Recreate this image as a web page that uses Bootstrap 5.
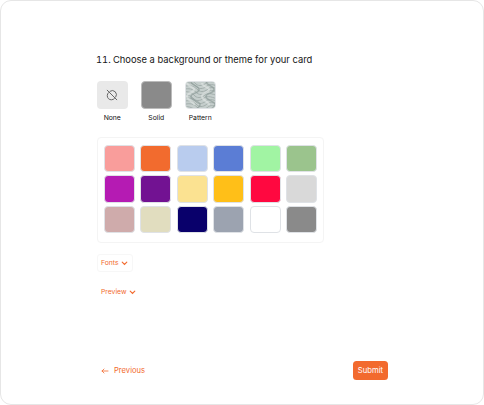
<!DOCTYPE html>
<html lang="en">
<head>
<meta charset="utf-8">
<meta name="viewport" content="width=device-width, initial-scale=1">
<title>Card background</title>
<link href="https://cdn.jsdelivr.net/npm/bootstrap@5.3.0/dist/css/bootstrap.min.css" rel="stylesheet">
<style>
body{font-family:Inter,"Liberation Sans",sans-serif;background:#fff;color:#161616}
.panel{height:405px;border:1px solid #e6e6e6;border-radius:11px;padding:52px 95px 0 96px}
.question{font-size:9.37px;line-height:14px;margin:0 0 0 -1px;font-weight:400;white-space:nowrap}
.question-number{width:17px;font-variant-numeric:tabular-nums}
.themes{gap:13.5px;margin-top:14px}
.theme-option{width:30.5px;font-size:6.8px;line-height:9px;color:#111}
.tile{width:30.5px;height:27.5px;border-radius:4px;border:.5px solid #e0e3e6;overflow:hidden;margin-bottom:4px}
.tile svg{display:block}
.tile-none{background:#e9e9e9;border:0}
.tile-solid{background:#8a8a8a;border-color:#bbb}
.palette{width:227px;height:106px;margin-top:15.5px;border:1px solid #f4f4f4;border-radius:4px;padding:6.5px 0 0 5.5px;display:grid;grid-template-columns:repeat(6,31px);grid-auto-rows:27.5px;column-gap:5.5px;row-gap:3px}
.swatch{border:1px solid #dfe2e6;border-radius:4px}
.accent{color:#f26a2e}
.toggle{font-size:6.8px;line-height:10px;gap:2px;height:18px;padding:0 4px 0 3px;border:1px solid transparent;border-radius:3px;background:none}
.toggle-active{border-color:#f7f7f7}
.toggles{margin-top:11px;gap:11px}
.actions{margin-top:60px;height:19px}
.previous{font-size:7.6px;line-height:11px;padding:0 0 0 4px;gap:5px}
.submit{font-size:7.7px;line-height:11px;width:35px;height:19px;background:#f26a2e;color:#fff;border-radius:3.5px}
</style>
</head>
<body>
<main class="panel">
<h1 class="question d-flex"><span class="question-number">11.</span><span>Choose a background or theme for your card</span></h1>
<div class="themes d-flex">
<div class="theme-option d-flex flex-column align-items-center"><div class="tile tile-none d-flex align-items-center justify-content-center"><svg width="12" height="12" viewBox="0 0 12 12" fill="none" stroke="#666" stroke-width="1" stroke-linecap="round"><path d="M1.2 1.2 10.8 10.8M4 2.2A4.2 4.2 0 0 1 9.8 8M8.4 9.6A4.2 4.2 0 0 1 2.4 3.7"/></svg></div>None</div>
<div class="theme-option d-flex flex-column align-items-center"><div class="tile tile-solid"></div>Solid</div>
<div class="theme-option d-flex flex-column align-items-center"><div class="tile"><svg width="31" height="28" viewBox="0 0 31 28" fill="none">
<defs><path id="wave" d="M-2 0C4-1 7 1 10 4S18 5 20 3 26 1 33 4"/><filter id="soft"><feGaussianBlur stdDeviation=".7"/></filter></defs>
<path fill="#c5cecc" d="M0 0h31v28H0z"/>
<g filter="url(#soft)">
<g stroke="#a4afad" stroke-width="1"><use href="#wave" y="-2"/><use href="#wave" x="1" y="1"/><use href="#wave" x="2" y="4"/><use href="#wave" x="1" y="7"/><use href="#wave" x="-1" y="10"/><use href="#wave" x="-2" y="13"/><use href="#wave" x="0" y="16"/><use href="#wave" x="1" y="19"/><use href="#wave" x="2" y="22"/><use href="#wave" y="25"/></g>
<path d="M5-1C5 4 14 4 13 8S4 11 5 15s10 4 9 8-5 3-5 6M20-1c0 5 9 5 8 9s-9 3-8 7 10 4 9 8-5 3-5 6" stroke="#8f9c9a" stroke-opacity=".7" stroke-width="1.5"/>
<path d="M1 1c1 4 8 4 7 7S0 11 1 15s8 5 7 8M16 1c0 4 8 4 7 7s-8 3-7 7 8 5 7 8" stroke="#e2e8e6" stroke-opacity=".6" stroke-width="2"/>
</g></svg></div>Pattern</div>
</div>
<div class="palette">
<div class="swatch" style="background-color:#f99d9b"></div><div class="swatch" style="background-color:#f26b2e"></div><div class="swatch" style="background-color:#b9ccee"></div><div class="swatch" style="background-color:#5b7dd5"></div><div class="swatch" style="background-color:#a1f4a3"></div><div class="swatch" style="background-color:#9bc48d"></div>
<div class="swatch" style="background-color:#b51bb3"></div><div class="swatch" style="background-color:#721292"></div><div class="swatch" style="background-color:#fbe291"></div><div class="swatch" style="background-color:#ffbf18"></div><div class="swatch" style="background-color:#ff0840"></div><div class="swatch" style="background-color:#d9d9d9"></div>
<div class="swatch" style="background-color:#cfabab"></div><div class="swatch" style="background-color:#e1ddbf"></div><div class="swatch" style="background-color:#09006b"></div><div class="swatch" style="background-color:#9ca3b0"></div><div class="swatch" style="background-color:#fff"></div><div class="swatch" style="background-color:#8a8a8a"></div>
</div>
<div class="toggles d-flex flex-column align-items-start">
<button class="toggle toggle-active accent d-flex align-items-center" type="button">Fonts<svg width="7" height="5" viewBox="0 0 7 5" fill="none" stroke="currentColor" stroke-width="1.15" stroke-linecap="round"><path d="m1.2 1.2 2.3 2.3 2.3-2.3"/></svg></button>
<button class="toggle accent d-flex align-items-center" type="button">Preview<svg width="7" height="5" viewBox="0 0 7 5" fill="none" stroke="currentColor" stroke-width="1.15" stroke-linecap="round"><path d="m1.2 1.2 2.3 2.3 2.3-2.3"/></svg></button>
</div>
<div class="actions d-flex justify-content-between align-items-center">
<button class="previous accent border-0 bg-transparent d-flex align-items-center" type="button"><svg width="8" height="6" viewBox="0 0 8 6" fill="none" stroke="currentColor" stroke-width=".8" stroke-linecap="round"><path d="M7 3H1M3 1 1 3l2 2"/></svg>Previous</button>
<button class="submit border-0 p-0" type="button">Submit</button>
</div>
</main>
<script src="https://cdn.jsdelivr.net/npm/bootstrap@5.3.0/dist/js/bootstrap.bundle.min.js"></script>
</body>
</html>
